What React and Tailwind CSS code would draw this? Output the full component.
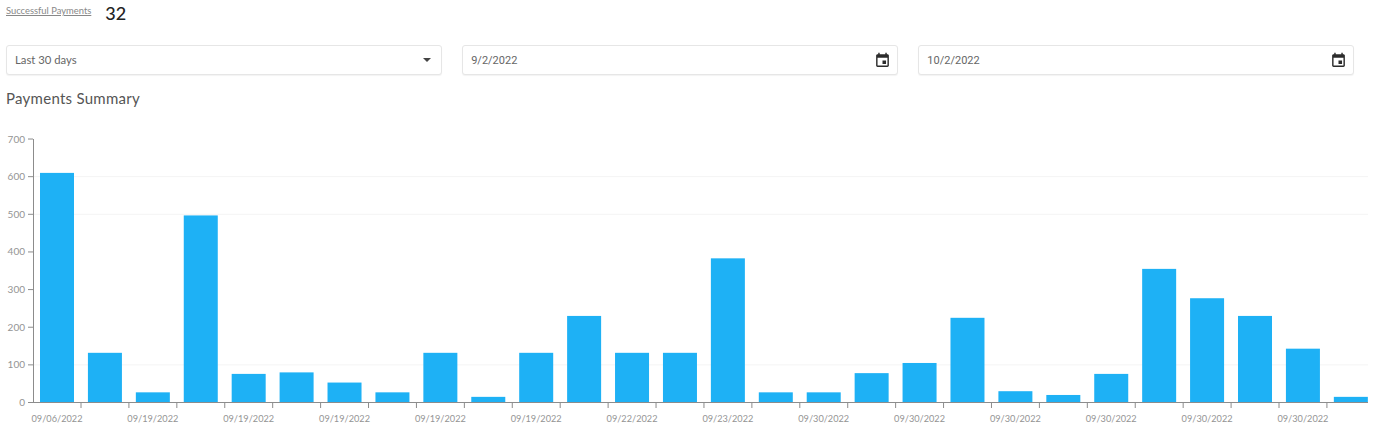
import React from 'react';

const values = [610, 132, 27, 497, 76, 80, 53, 27, 132, 15, 132, 230, 132, 132, 383, 27, 27, 78, 105, 225, 30, 20, 76, 355, 277, 230, 143, 15];
const labels = ['09/06/2022', '09/19/2022', '09/19/2022', '09/19/2022', '09/19/2022', '09/19/2022', '09/22/2022', '09/23/2022', '09/30/2022', '09/30/2022', '09/30/2022', '09/30/2022', '09/30/2022', '09/30/2022'];
const yTicks = [0, 100, 200, 300, 400, 500, 600, 700];
const gridLines = [100, 500, 600];

const yFor = (v) => 402.5 - v * 0.3764;

const CalendarIcon = () => (
  <svg viewBox="0 0 24 24" className="w-[17px] h-[17px] fill-[#2b2b2b]">
    <path d="M17 12h-5v5h5v-5zM16 1v2H8V1H6v2H5c-1.11 0-1.99.9-1.99 2L3 19c0 1.1.89 2 2 2h14c1.1 0 2-.9 2-2V5c0-1.1-.9-2-2-2h-1V1h-2zm3 18H5V8h14v11z" />
  </svg>
);

const Field = ({ children }) => (
  <div className="h-[30px] flex items-center justify-between pl-2 pr-[6px] bg-white border border-[#e6e6e6] rounded-[3px] shadow-[0_1px_1px_rgba(0,0,0,0.05)] text-[#666]">
    {children}
  </div>
);

const Chart = () => (
  <svg width="1374" height="316" viewBox="0 110 1374 316" className="block font-['Lato',sans-serif]">
    {gridLines.map((v) => (
      <line key={v} x1="33" x2="1368" y1={yFor(v)} y2={yFor(v)} stroke="#f4f4f4" />
    ))}
    {values.map((v, i) => (
      <rect key={i} x={40 + i * 47.92} y={yFor(v)} width="34" height={402.5 - yFor(v)} fill="#1eb1f5" />
    ))}
    <line x1="33.5" x2="33.5" y1="139" y2="403" stroke="#8c8c8c" />
    <line x1="33" x2="1368" y1="402.5" y2="402.5" stroke="#8c8c8c" />
    {yTicks.map((v) => (
      <g key={v}>
        <line x1="28" x2="33" y1={yFor(v)} y2={yFor(v)} stroke="#8c8c8c" />
        <text x="25" y={yFor(v) + 3.5} textAnchor="end" fontSize="10" fill="#949494">{v}</text>
      </g>
    ))}
    {values.map((_, i) => (
      <line key={i} x1={81 + i * 47.92} x2={81 + i * 47.92} y1="403" y2="408" stroke="#8c8c8c" />
    ))}
    {labels.map((label, i) => (
      <text key={i} x={57 + i * 95.84} y="422" textAnchor="middle" fontSize="9.2" fill="#949494">{label}</text>
    ))}
  </svg>
);

export default function App() {
  return (
    <div className="w-[1374px] h-[426px] overflow-hidden bg-white font-['Lato',sans-serif]">
      <div className="flex items-start pl-[6px] pt-[2px] h-[45px]">
        <span className="text-[9.4px] leading-[18px] text-[#888] underline">Successful Payments</span>
        <span className="ml-[14px] text-lg leading-[22px] font-medium text-[#222]">32</span>
      </div>
      <div className="grid grid-cols-3 gap-[20.5px] pl-[6px] pr-5">
        <Field>
          <span className="text-[11.3px] pt-px">Last 30 days</span>
          <span className="mr-[4px] border-x-4 border-t-[4px] border-x-transparent border-t-[#444]" />
        </Field>
        <Field>
          <span className="text-[11px] pt-[2px] font-['Roboto',sans-serif]">9/2/2022</span>
          <CalendarIcon />
        </Field>
        <Field>
          <span className="text-[11px] pt-[2px] font-['Roboto',sans-serif]">10/2/2022</span>
          <CalendarIcon />
        </Field>
      </div>
      <h2 className="mt-[13px] mb-[2px] pl-[6px] text-[15px] leading-[20px] tracking-[0.27px] text-[#555]">Payments Summary</h2>
      <Chart />
    </div>
  );
}
